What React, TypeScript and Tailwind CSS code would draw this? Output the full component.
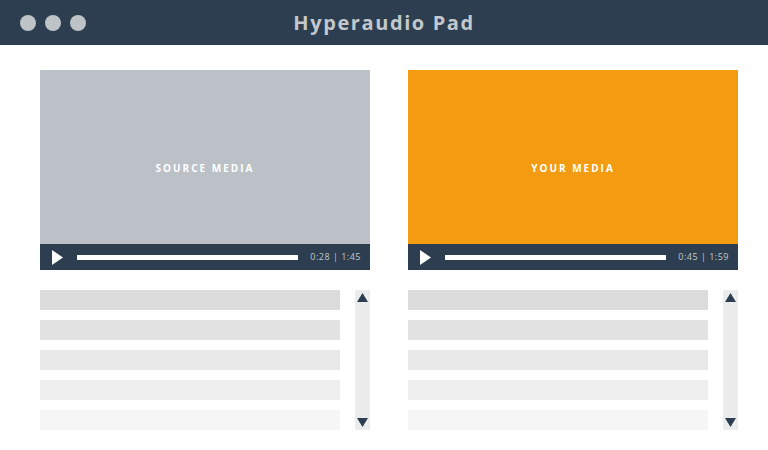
import React from "react";

const rowShades = ["bg-[#dcdcdc]", "bg-[#e2e2e2]", "bg-[#e8e8e8]", "bg-[#efefef]", "bg-[#f6f6f6]"];

function Player({ label, time, tone }: { label: string; time: string; tone: string }) {
  return (
    <div className="flex w-[330px] flex-col">
      <div className={`flex h-[174px] items-center justify-center pt-[22px] ${tone}`}>
        <span className="text-[10px] font-bold tracking-[2px] text-white">{label}</span>
      </div>
      <div className="flex h-[26px] items-center bg-[#2c3e50] pl-[12px] pr-[9px]">
        <svg width="11" height="15" viewBox="0 0 11 15" className="shrink-0">
          <polygon points="0,0 11,7.5 0,15" fill="#ffffff" />
        </svg>
        <div className="ml-[14px] h-[5px] w-[221px] bg-white" />
        <span className="ml-auto text-[9px] tracking-[0.5px] text-[#c3c8ce]">{time}</span>
      </div>
    </div>
  );
}

function Transcript() {
  return (
    <div className="mt-[20px] flex w-[330px] gap-[15px]">
      <div className="flex w-[300px] flex-col gap-[10px]">
        {rowShades.map((c) => (
          <div key={c} className={`h-[20px] ${c}`} />
        ))}
      </div>
      <div className="flex h-[140px] w-[15px] flex-col items-center justify-between bg-[#ececec] py-[3px]">
        <svg width="11" height="9" viewBox="0 0 11 9">
          <polygon points="5.5,0 11,9 0,9" fill="#2c3e50" />
        </svg>
        <svg width="11" height="9" viewBox="0 0 11 9">
          <polygon points="0,0 11,0 5.5,9" fill="#2c3e50" />
        </svg>
      </div>
    </div>
  );
}

export default function App() {
  return (
    <div
      className="h-[450px] w-[768px] overflow-hidden bg-white"
      style={{ fontFamily: '"Open Sans", "DejaVu Sans", sans-serif' }}
    >
      <header className="relative flex h-[45px] items-center bg-[#2c3e50] px-[20px]">
        <div className="flex gap-[9px]">
          <span className="h-[16px] w-[16px] rounded-full bg-[#bdc3c7]" />
          <span className="h-[16px] w-[16px] rounded-full bg-[#bdc3c7]" />
          <span className="h-[16px] w-[16px] rounded-full bg-[#bdc3c7]" />
        </div>
        <h1 className="absolute inset-x-0 text-center text-[20px] font-bold tracking-[1.6px] text-[#c3c8cd]">
          Hyperaudio Pad
        </h1>
      </header>
      <main className="flex gap-[38px] px-[40px] pt-[25px]">
        <div className="flex flex-col">
          <Player label="SOURCE MEDIA" time="0:28 | 1:45" tone="bg-[#bcc1c8]" />
          <Transcript />
        </div>
        <div className="flex flex-col">
          <Player label="YOUR MEDIA" time="0:45 | 1:59" tone="bg-[#f39c12]" />
          <Transcript />
        </div>
      </main>
    </div>
  );
}
